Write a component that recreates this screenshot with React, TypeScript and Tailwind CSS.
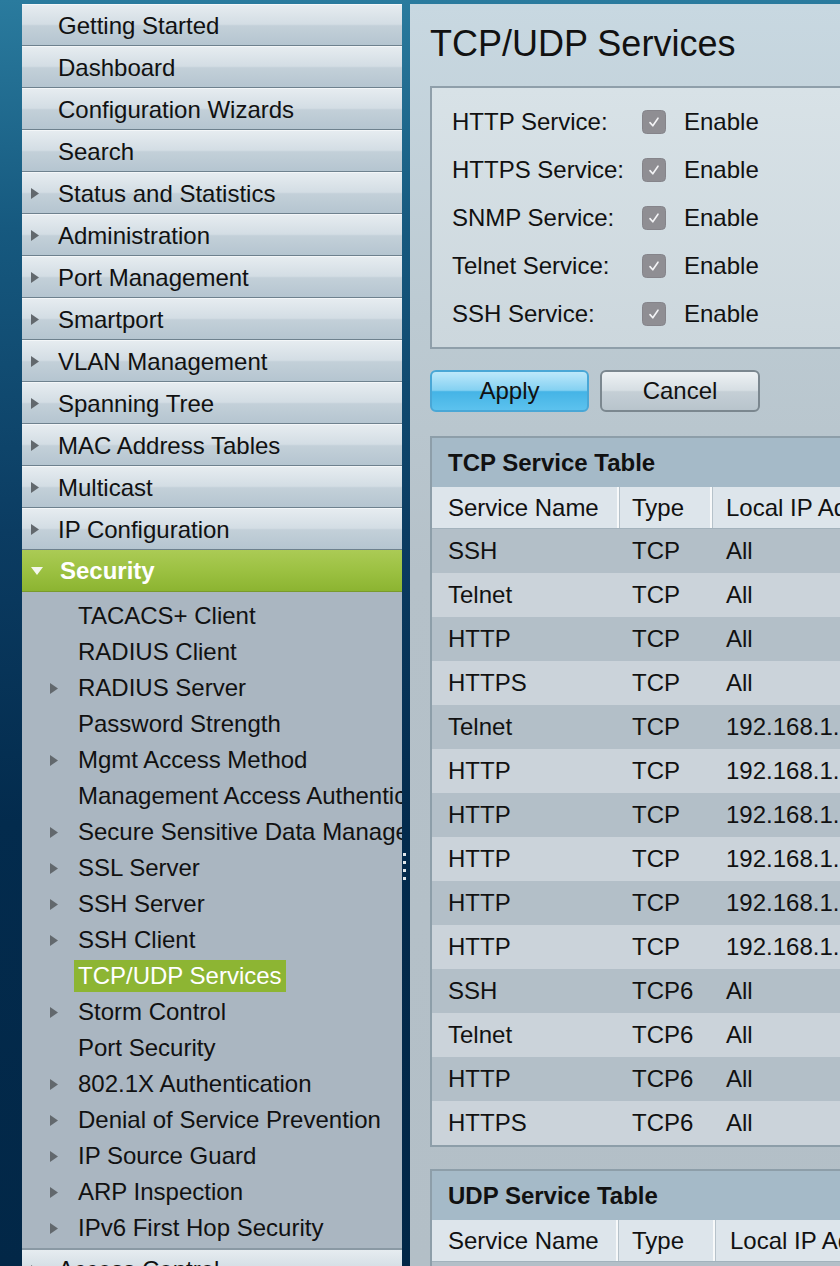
import React from "react";

const topItems = [
  { label: "Getting Started", arrow: false },
  { label: "Dashboard", arrow: false },
  { label: "Configuration Wizards", arrow: false },
  { label: "Search", arrow: false },
  { label: "Status and Statistics", arrow: true },
  { label: "Administration", arrow: true },
  { label: "Port Management", arrow: true },
  { label: "Smartport", arrow: true },
  { label: "VLAN Management", arrow: true },
  { label: "Spanning Tree", arrow: true },
  { label: "MAC Address Tables", arrow: true },
  { label: "Multicast", arrow: true },
  { label: "IP Configuration", arrow: true },
];

const securityItems = [
  { label: "TACACS+ Client", arrow: false },
  { label: "RADIUS Client", arrow: false },
  { label: "RADIUS Server", arrow: true },
  { label: "Password Strength", arrow: false },
  { label: "Mgmt Access Method", arrow: true },
  { label: "Management Access Authentication", arrow: false },
  { label: "Secure Sensitive Data Management", arrow: true },
  { label: "SSL Server", arrow: true },
  { label: "SSH Server", arrow: true },
  { label: "SSH Client", arrow: true },
  { label: "TCP/UDP Services", arrow: false, active: true },
  { label: "Storm Control", arrow: true },
  { label: "Port Security", arrow: false },
  { label: "802.1X Authentication", arrow: true },
  { label: "Denial of Service Prevention", arrow: true },
  { label: "IP Source Guard", arrow: true },
  { label: "ARP Inspection", arrow: true },
  { label: "IPv6 First Hop Security", arrow: true },
];

const services = ["HTTP Service:", "HTTPS Service:", "SNMP Service:", "Telnet Service:", "SSH Service:"];

const tcpRows = [
  ["SSH", "TCP", "All"],
  ["Telnet", "TCP", "All"],
  ["HTTP", "TCP", "All"],
  ["HTTPS", "TCP", "All"],
  ["Telnet", "TCP", "192.168.1.254"],
  ["HTTP", "TCP", "192.168.1.254"],
  ["HTTP", "TCP", "192.168.1.254"],
  ["HTTP", "TCP", "192.168.1.254"],
  ["HTTP", "TCP", "192.168.1.254"],
  ["HTTP", "TCP", "192.168.1.254"],
  ["SSH", "TCP6", "All"],
  ["Telnet", "TCP6", "All"],
  ["HTTP", "TCP6", "All"],
  ["HTTPS", "TCP6", "All"],
];

const RightArrow = () => (
  <svg width="8" height="11" viewBox="0 0 8 11">
    <polygon points="0,0 8,5.5 0,11" fill="#62686d" />
  </svg>
);

const CheckBox = () => (
  <svg width="24" height="24" viewBox="0 0 24 24" className="shrink-0">
    <rect x="0.5" y="0.5" width="23" height="23" rx="4" fill="#8f8e93" stroke="#85848a" />
    <path d="M8 12.6l2.8 3.2L16 8.2" fill="none" stroke="#f4f4f6" strokeWidth="1.6" strokeLinecap="round" strokeLinejoin="round" />
  </svg>
);

const App = () => {
  return (
    <div className="w-[840px] h-[1266px] overflow-hidden flex bg-[linear-gradient(to_bottom,#2a7b9e_0%,#16597f_18%,#0b3c62_42%,#032b4d_65%,#022747_100%)] font-['Liberation_Sans',Arial,sans-serif] text-[#111]">
      <div className="w-[22px] shrink-0" />

      {/* left menu */}
      <nav className="w-[380px] shrink-0 mt-[4px] overflow-hidden whitespace-nowrap">
        {topItems.map((item) => (
          <div
            key={item.label}
            className="h-[42px] flex items-center border-t border-t-[#f3f6f8] border-b border-b-[#6e818e] bg-[linear-gradient(to_bottom,#e6ecf0_0%,#d3dde4_48%,#c3d0d9_52%,#b5c5d0_100%)]"
          >
            <span className="w-[36px] shrink-0 pl-[9px] flex items-center">{item.arrow && <RightArrow />}</span>
            <span className="text-[24px] pt-[1px]">{item.label}</span>
          </div>
        ))}
        <div className="h-[42px] flex items-center bg-[linear-gradient(to_bottom,#abcb55_0%,#9cc142_50%,#8cb431_100%)] border-b border-b-[#7a9a2c]">
          <span className="w-[38px] shrink-0 pl-[9px] flex items-center">
            <svg width="12" height="8" viewBox="0 0 12 8">
              <polygon points="0,0 12,0 6,8" fill="#f4f7ee" />
            </svg>
          </span>
          <span className="text-[24px] font-bold text-white">Security</span>
        </div>
        <div className="bg-[#aab6c1] pt-[6px] pb-[2px]">
          {securityItems.map((item) => (
            <div key={item.label} className="h-[36px] flex items-center">
              <span className="w-[56px] shrink-0 pl-[28px] flex items-center">{item.arrow && <RightArrow />}</span>
              {item.active ? (
                <span className="h-[32px] -ml-[4px] px-[4px] flex items-center bg-[#8db533] text-white text-[24px]">{item.label}</span>
              ) : (
                <span className="text-[24px]">{item.label}</span>
              )}
            </div>
          ))}
        </div>
        <div className="h-[42px] flex items-center border-t-2 border-t-[#8a99a4] bg-[linear-gradient(to_bottom,#e6ecf0_0%,#d3dde4_48%,#c3d0d9_52%,#b5c5d0_100%)]">
          <span className="w-[36px] shrink-0 pl-[9px] flex items-center"><RightArrow /></span>
          <span className="text-[24px]">Access Control</span>
        </div>
      </nav>

      {/* splitter */}
      <div className="w-[8px] shrink-0 flex flex-col gap-[5px] pt-[853px] pl-[1px]">
        <span className="w-[3px] h-[3px] bg-[#dfe6ea]" />
        <span className="w-[3px] h-[3px] bg-[#dfe6ea]" />
        <span className="w-[3px] h-[3px] bg-[#dfe6ea]" />
        <span className="w-[3px] h-[3px] bg-[#dfe6ea]" />
      </div>

      {/* content */}
      <main className="flex-1 mt-[4px] overflow-hidden pl-[20px] bg-[linear-gradient(to_bottom,#c8d8e1_0%,#bccad2_25%,#b5c1c9_45%,#b3bfc7_100%)]">
        <div className="w-[620px]">
          <div className="h-[79px] flex items-center">
            <h1 className="text-[36px] leading-none">TCP/UDP Services</h1>
          </div>

          <div className="mt-[3px] border-2 border-[#8f9faa] bg-[linear-gradient(to_bottom,#d8e2e7_0%,#ccd7dd_100%)] pt-[10px] pb-[9px] pl-[20px]">
            {services.map((s) => (
              <div key={s} className="h-[48px] flex items-center">
                <span className="w-[190px] text-[24px]">{s}</span>
                <CheckBox />
                <span className="ml-[18px] text-[24px]">Enable</span>
              </div>
            ))}
          </div>

          <div className="mt-[21px] flex">
            <button className="w-[159px] h-[42px] rounded-[6px] border-2 border-[#49a7d6] bg-[linear-gradient(to_bottom,#bde8fa_0%,#84d1f2_48%,#45b4e6_52%,#5cc2ee_100%)] text-[24px]">
              Apply
            </button>
            <button className="ml-[11px] w-[160px] h-[42px] rounded-[6px] border-2 border-[#7b878f] bg-[linear-gradient(to_bottom,#eef2f4_0%,#d6dee3_48%,#c5cfd6_52%,#b8c4cc_100%)] text-[24px]">
              Cancel
            </button>
          </div>

          {/* TCP table */}
          <div className="mt-[24px] border-2 border-[#8d9ea9]">
            <div className="h-[49px] flex items-center pl-[16px] bg-[#a5bac8] text-[24px] font-bold">TCP Service Table</div>
            <div className="h-[42px] grid grid-cols-[185px_93px_1fr] bg-[#dde5eb] border-b border-b-[#a3b2bc] text-[24px]">
              <div className="flex items-center pl-[16px]">Service Name</div>
              <div className="flex items-center pl-[13px] border-l-2 border-l-[#f7f9fa] shadow-[inset_1px_0_0_#b6c2ca]">Type</div>
              <div className="flex items-center pl-[14px] border-l-2 border-l-[#f7f9fa] shadow-[inset_1px_0_0_#b6c2ca]">Local IP Address</div>
            </div>
            {tcpRows.map((r, i) => (
              <div
                key={i}
                className={
                  i % 2 === 0
                    ? "h-[44px] grid grid-cols-[185px_93px_1fr] bg-[#b3bfc8] text-[24px]"
                    : "h-[44px] grid grid-cols-[185px_93px_1fr] bg-[#cbd3da] text-[24px]"
                }
              >
                <div className="flex items-center pl-[16px]">{r[0]}</div>
                <div className="flex items-center pl-[15px]">{r[1]}</div>
                <div className="flex items-center pl-[16px]">{r[2]}</div>
              </div>
            ))}
          </div>

          {/* UDP table */}
          <div className="mt-[22px] border-2 border-[#8d9ea9]">
            <div className="h-[49px] flex items-center pl-[16px] bg-[#a5bac8] text-[24px] font-bold">UDP Service Table</div>
            <div className="h-[42px] grid grid-cols-[184px_97px_1fr] bg-[#dde5eb] border-b border-b-[#a3b2bc] text-[24px]">
              <div className="flex items-center pl-[16px]">Service Name</div>
              <div className="flex items-center pl-[14px] border-l-2 border-l-[#f7f9fa] shadow-[inset_1px_0_0_#b6c2ca]">Type</div>
              <div className="flex items-center pl-[15px] border-l-2 border-l-[#f7f9fa] shadow-[inset_1px_0_0_#b6c2ca]">Local IP Address</div>
            </div>
            <div className="h-[44px] grid grid-cols-[184px_97px_1fr] bg-[#b3bfc8] text-[24px]">
              <div className="flex items-center pl-[16px]">SNMP</div>
              <div className="flex items-center pl-[16px]">UDP</div>
              <div className="flex items-center pl-[16px]">All</div>
            </div>
          </div>
        </div>
      </main>
    </div>
  );
};

export default App;
